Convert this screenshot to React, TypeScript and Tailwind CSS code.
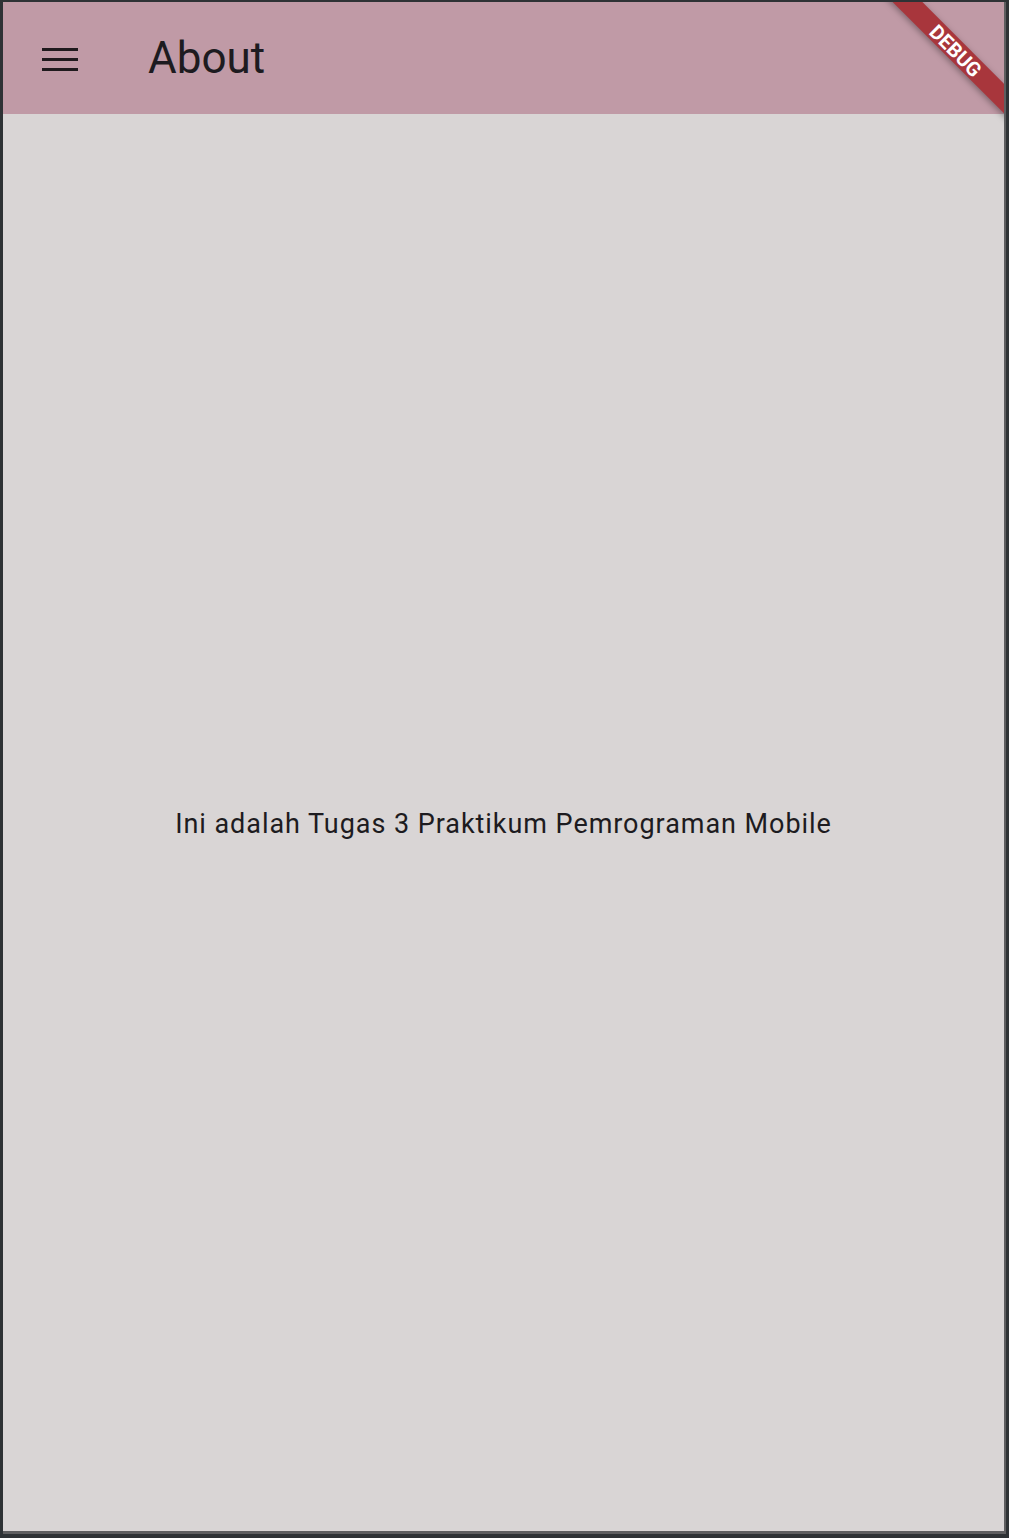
import React from "react";

export default function App() {
  return (
    <div className="w-[1009px] h-[1538px] bg-[#2e3235] pt-[2px] pl-[3px] pr-[3px] pb-[4px] flex flex-col" style={{ fontFamily: "Roboto, 'Noto Sans', sans-serif" }}>
      <div className="flex-1 flex flex-col border-r-[2px] border-b-[3px] border-[#5e5e60] relative overflow-hidden">
        <header className="h-[112px] bg-[#c09aa6] flex items-center shrink-0">
          <div className="w-[36px] ml-[39px] flex flex-col gap-[7px] mt-[2px]">
            <div className="h-[3px] bg-[#1f1a1d]" />
            <div className="h-[3px] bg-[#1f1a1d]" />
            <div className="h-[3px] bg-[#1f1a1d]" />
          </div>
          <h1 className="ml-[70px] text-[44px] leading-none text-[#1d1b20] font-normal mt-[-1px]">About</h1>
        </header>
        <main className="flex-1 bg-[#d9d5d5] flex items-center justify-center">
          <p className="text-[27px] text-[#1d1b20] tracking-[0.95px] leading-none mt-[3px]">Ini adalah Tugas 3 Praktikum Pemrograman Mobile</p>
        </main>
        <div className="absolute top-0 right-0 w-[130px] h-[130px] overflow-hidden pointer-events-none">
          <div className="absolute left-[-18px] top-[38px] w-[200px] h-[21px] rotate-45 bg-[#a8363c] shadow-[0_2px_6px_rgba(0,0,0,0.35)] flex items-center justify-center">
            <span className="text-white font-bold text-[20px] leading-none">DEBUG</span>
          </div>
        </div>
      </div>
    </div>
  );
}
